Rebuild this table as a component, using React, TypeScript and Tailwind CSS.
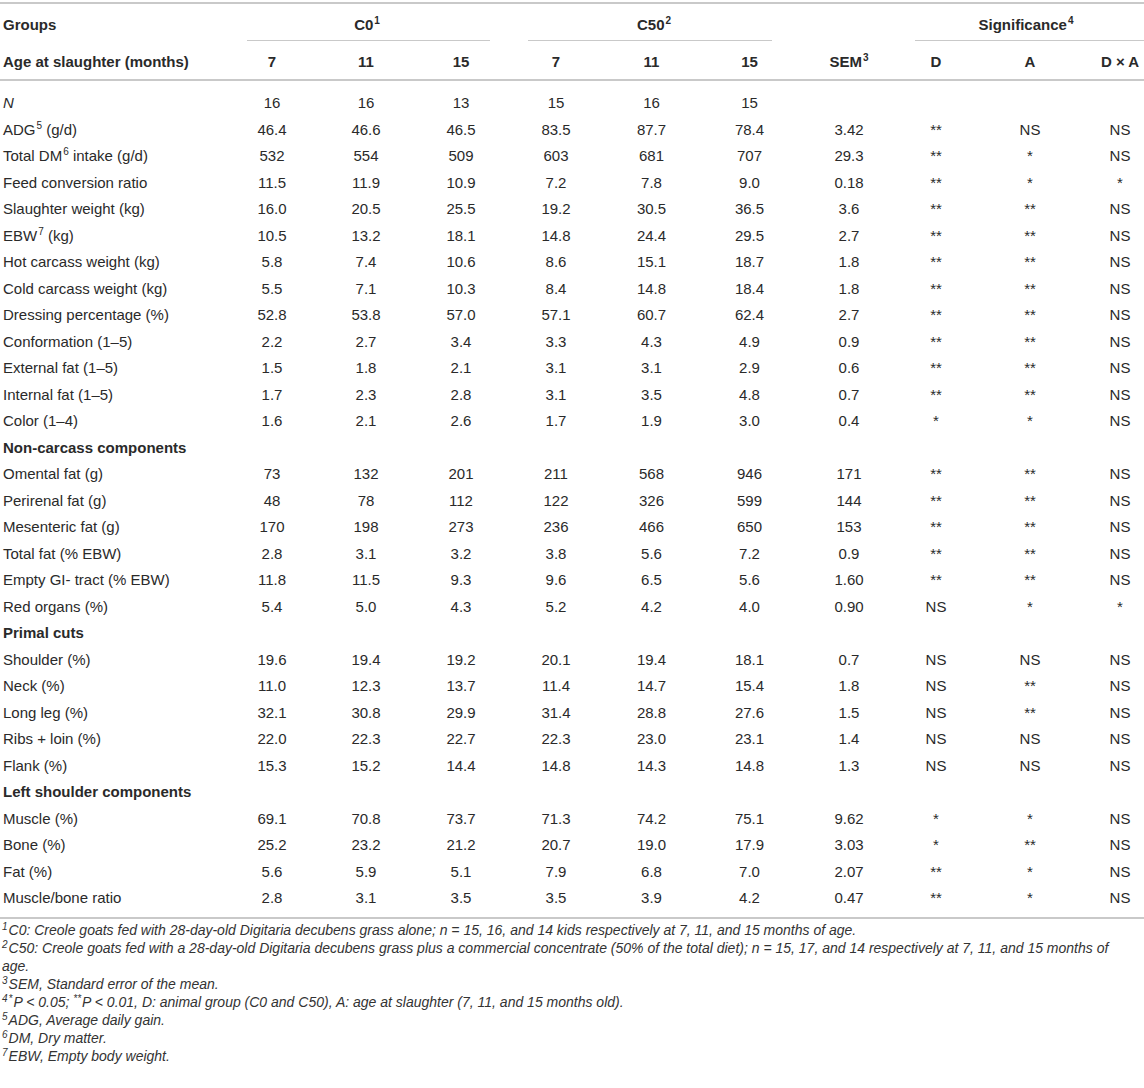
import React from 'react';

type Row = {
  label: React.ReactNode;
  values?: string[];
  section?: boolean;
};

const cols =
  'grid grid-cols-[225px_94px_94px_96px_94px_97px_99px_100px_74px_114px_66px]';

const Sup = ({ children }: { children: React.ReactNode }) => (
  <sup className="text-[10px] relative -top-[6px] ml-[1px]">{children}</sup>
);

const rows: Row[] = [
  { label: <i>N</i>, values: ['16', '16', '13', '15', '16', '15', '', '', '', ''] },
  { label: <>ADG<Sup>5</Sup> (g/d)</>, values: ['46.4', '46.6', '46.5', '83.5', '87.7', '78.4', '3.42', '**', 'NS', 'NS'] },
  { label: <>Total DM<Sup>6</Sup> intake (g/d)</>, values: ['532', '554', '509', '603', '681', '707', '29.3', '**', '*', 'NS'] },
  { label: 'Feed conversion ratio', values: ['11.5', '11.9', '10.9', '7.2', '7.8', '9.0', '0.18', '**', '*', '*'] },
  { label: 'Slaughter weight (kg)', values: ['16.0', '20.5', '25.5', '19.2', '30.5', '36.5', '3.6', '**', '**', 'NS'] },
  { label: <>EBW<Sup>7</Sup> (kg)</>, values: ['10.5', '13.2', '18.1', '14.8', '24.4', '29.5', '2.7', '**', '**', 'NS'] },
  { label: 'Hot carcass weight (kg)', values: ['5.8', '7.4', '10.6', '8.6', '15.1', '18.7', '1.8', '**', '**', 'NS'] },
  { label: 'Cold carcass weight (kg)', values: ['5.5', '7.1', '10.3', '8.4', '14.8', '18.4', '1.8', '**', '**', 'NS'] },
  { label: 'Dressing percentage (%)', values: ['52.8', '53.8', '57.0', '57.1', '60.7', '62.4', '2.7', '**', '**', 'NS'] },
  { label: 'Conformation (1–5)', values: ['2.2', '2.7', '3.4', '3.3', '4.3', '4.9', '0.9', '**', '**', 'NS'] },
  { label: 'External fat (1–5)', values: ['1.5', '1.8', '2.1', '3.1', '3.1', '2.9', '0.6', '**', '**', 'NS'] },
  { label: 'Internal fat (1–5)', values: ['1.7', '2.3', '2.8', '3.1', '3.5', '4.8', '0.7', '**', '**', 'NS'] },
  { label: 'Color (1–4)', values: ['1.6', '2.1', '2.6', '1.7', '1.9', '3.0', '0.4', '*', '*', 'NS'] },
  { label: 'Non-carcass components', section: true },
  { label: 'Omental fat (g)', values: ['73', '132', '201', '211', '568', '946', '171', '**', '**', 'NS'] },
  { label: 'Perirenal fat (g)', values: ['48', '78', '112', '122', '326', '599', '144', '**', '**', 'NS'] },
  { label: 'Mesenteric fat (g)', values: ['170', '198', '273', '236', '466', '650', '153', '**', '**', 'NS'] },
  { label: 'Total fat (% EBW)', values: ['2.8', '3.1', '3.2', '3.8', '5.6', '7.2', '0.9', '**', '**', 'NS'] },
  { label: 'Empty GI- tract (% EBW)', values: ['11.8', '11.5', '9.3', '9.6', '6.5', '5.6', '1.60', '**', '**', 'NS'] },
  { label: 'Red organs (%)', values: ['5.4', '5.0', '4.3', '5.2', '4.2', '4.0', '0.90', 'NS', '*', '*'] },
  { label: 'Primal cuts', section: true },
  { label: 'Shoulder (%)', values: ['19.6', '19.4', '19.2', '20.1', '19.4', '18.1', '0.7', 'NS', 'NS', 'NS'] },
  { label: 'Neck (%)', values: ['11.0', '12.3', '13.7', '11.4', '14.7', '15.4', '1.8', 'NS', '**', 'NS'] },
  { label: 'Long leg (%)', values: ['32.1', '30.8', '29.9', '31.4', '28.8', '27.6', '1.5', 'NS', '**', 'NS'] },
  { label: 'Ribs + loin (%)', values: ['22.0', '22.3', '22.7', '22.3', '23.0', '23.1', '1.4', 'NS', 'NS', 'NS'] },
  { label: 'Flank (%)', values: ['15.3', '15.2', '14.4', '14.8', '14.3', '14.8', '1.3', 'NS', 'NS', 'NS'] },
  { label: 'Left shoulder components', section: true },
  { label: 'Muscle (%)', values: ['69.1', '70.8', '73.7', '71.3', '74.2', '75.1', '9.62', '*', '*', 'NS'] },
  { label: 'Bone (%)', values: ['25.2', '23.2', '21.2', '20.7', '19.0', '17.9', '3.03', '*', '**', 'NS'] },
  { label: 'Fat (%)', values: ['5.6', '5.9', '5.1', '7.9', '6.8', '7.0', '2.07', '**', '*', 'NS'] },
  { label: 'Muscle/bone ratio', values: ['2.8', '3.1', '3.5', '3.5', '3.9', '4.2', '0.47', '**', '*', 'NS'] },
];

const FnSup = ({ children }: { children: React.ReactNode }) => (
  <sup className="text-[10px] mr-[1px]">{children}</sup>
);

const App: React.FC = () => {
  return (
    <div className="w-[1144px] overflow-hidden bg-white pt-[2px] text-[#2a2a2a] font-['Liberation_Sans',Arial,sans-serif]">
      <div className="w-[1153px] text-[15px]">
        <div className="border-t-2 border-[#c9c9c9]">
          {/* header row 1 */}
          <div className={`${cols} h-[37px] font-bold leading-[18px]`}>
            <div className="pl-[3px] pt-[12px]">Groups</div>
            <div className="col-span-3 flex flex-col">
              <div className="pt-[12px] text-center">C0<Sup>1</Sup></div>
              <div className="mt-auto ml-[22px] mr-[19px] border-b border-[#c9c9c9]" />
            </div>
            <div className="col-span-3 flex flex-col">
              <div className="pt-[12px] text-center">C50<Sup>2</Sup></div>
              <div className="mt-auto ml-[19px] mr-[27px] border-b border-[#c9c9c9]" />
            </div>
            <div />
            <div className="col-span-3 flex flex-col">
              <div className="pt-[12px] text-center">Significance<Sup>4</Sup></div>
              <div className="mt-auto ml-[16px] border-b border-[#c9c9c9]" />
            </div>
          </div>
          {/* header row 2 */}
          <div className={`${cols} h-[40px] font-bold leading-[18px] pt-[12px] border-b-2 border-[#c9c9c9]`}>
            <div className="pl-[3px]">Age at slaughter (months)</div>
            {['7', '11', '15', '7', '11', '15'].map((a, i) => (
              <div key={i} className="text-center">{a}</div>
            ))}
            <div className="text-center">SEM<Sup>3</Sup></div>
            <div className="text-center">D</div>
            <div className="text-center">A</div>
            <div className="text-center">D × A</div>
          </div>
        </div>

        {/* body */}
        <div className="pt-[9px] pb-[5px] border-b-2 border-[#c9c9c9]">
          {rows.map((row, i) => (
            <div key={i} className={`${cols} h-[26.5px] items-center leading-[18px]`}>
              {row.section ? (
                <div className="col-span-11 pl-[3px] font-bold">{row.label}</div>
              ) : (
                <>
                  <div className="pl-[3px] whitespace-nowrap">{row.label}</div>
                  {row.values!.map((v, j) => (
                    <div key={j} className="text-center whitespace-nowrap">{v}</div>
                  ))}
                </>
              )}
            </div>
          ))}
        </div>
      </div>

      {/* footnotes */}
      <div className="w-[1128px] pt-[2px] pl-[2px] text-[14px] leading-[18px] italic text-[#333]">
        <p><FnSup>1</FnSup>C0: Creole goats fed with 28-day-old Digitaria decubens grass alone; n = 15, 16, and 14 kids respectively at 7, 11, and 15 months of age.</p>
        <p><FnSup>2</FnSup>C50: Creole goats fed with a 28-day-old Digitaria decubens grass plus a commercial concentrate (50% of the total diet); n = 15, 17, and 14 respectively at 7, 11, and 15 months of age.</p>
        <p><FnSup>3</FnSup>SEM, Standard error of the mean.</p>
        <p><FnSup>4</FnSup><FnSup>*</FnSup>P &lt; 0.05; <FnSup>**</FnSup>P &lt; 0.01, D: animal group (C0 and C50), A: age at slaughter (7, 11, and 15 months old).</p>
        <p><FnSup>5</FnSup>ADG, Average daily gain.</p>
        <p><FnSup>6</FnSup>DM, Dry matter.</p>
        <p><FnSup>7</FnSup>EBW, Empty body weight.</p>
      </div>
    </div>
  );
};

export default App;
